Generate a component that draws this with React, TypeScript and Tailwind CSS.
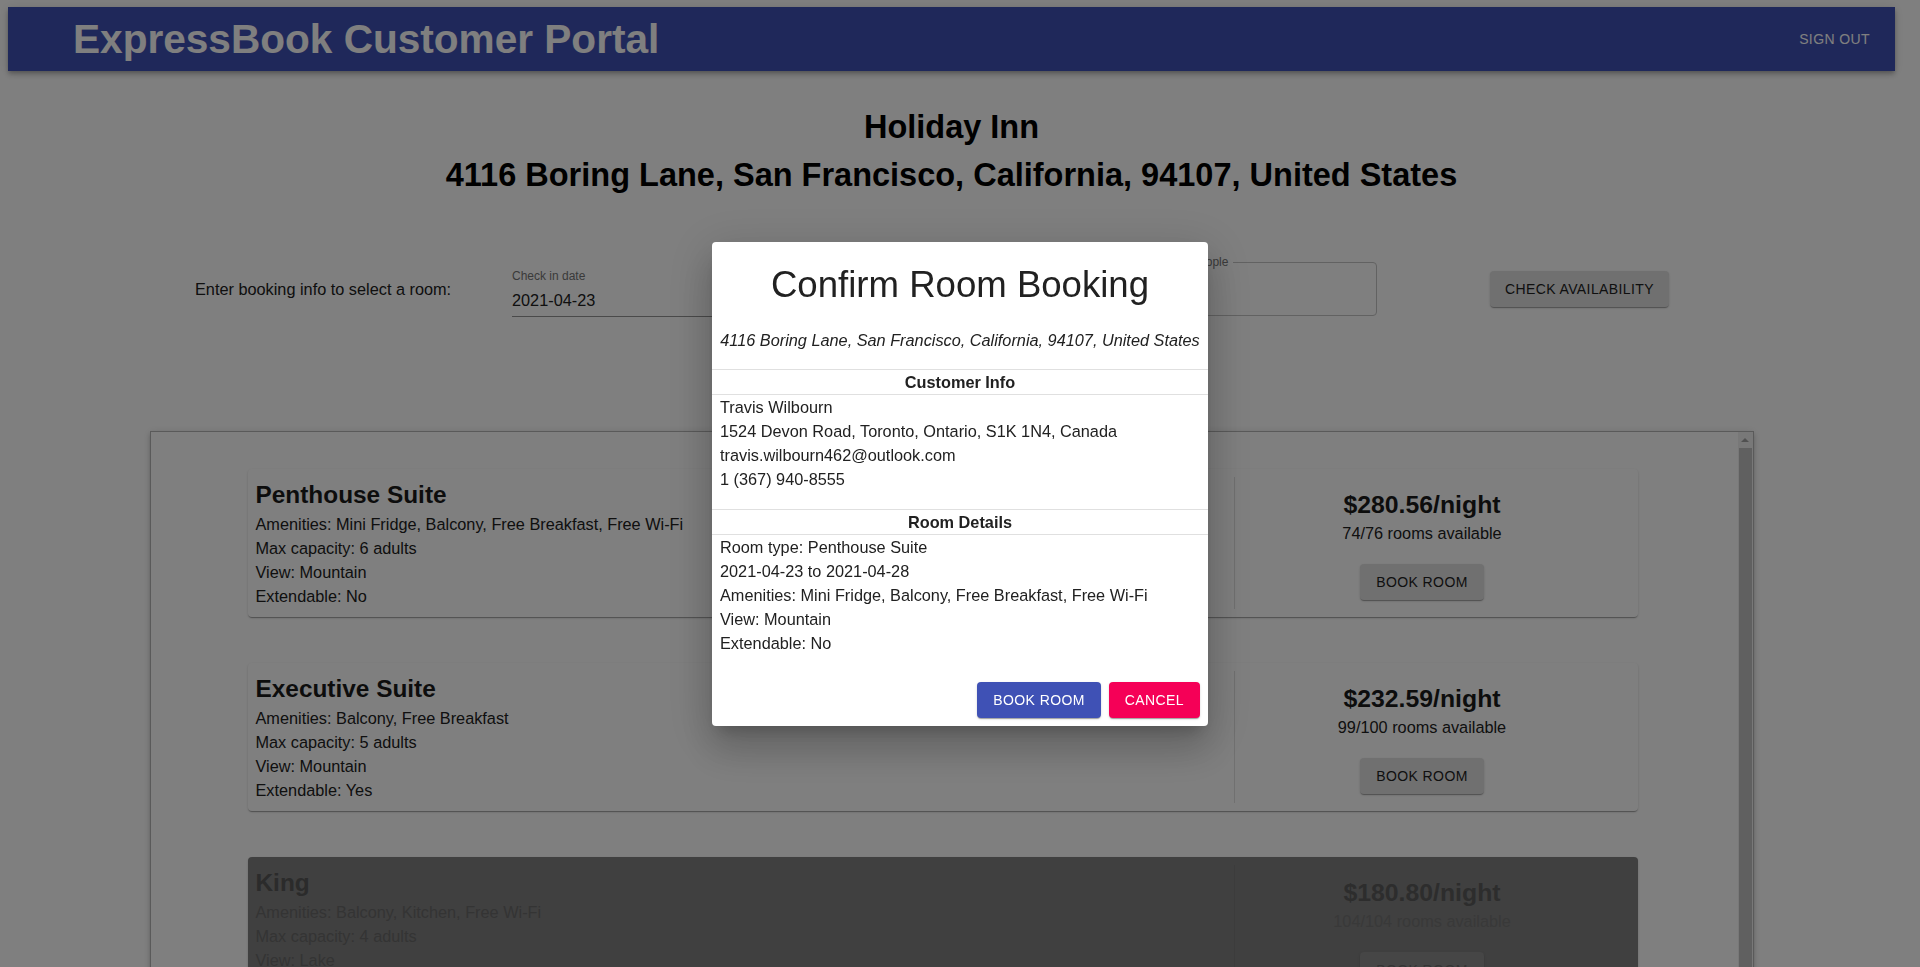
import React from "react";

type Room = {
  name: string;
  amenities: string;
  capacity: number;
  view: string;
  extendable: string;
  price: string;
  available: string;
  disabled?: boolean;
};

const rooms: Room[] = [
  {
    name: "Penthouse Suite",
    amenities: "Mini Fridge, Balcony, Free Breakfast, Free Wi-Fi",
    capacity: 6,
    view: "Mountain",
    extendable: "No",
    price: "280.56",
    available: "74/76",
  },
  {
    name: "Executive Suite",
    amenities: "Balcony, Free Breakfast",
    capacity: 5,
    view: "Mountain",
    extendable: "Yes",
    price: "232.59",
    available: "99/100",
  },
  {
    name: "King",
    amenities: "Balcony, Kitchen, Free Wi-Fi",
    capacity: 4,
    view: "Lake",
    extendable: "No",
    price: "180.80",
    available: "104/104",
    disabled: true,
  },
];

const paperShadow =
  "shadow-[0_2px_1px_-1px_rgba(0,0,0,0.2),0_1px_1px_0_rgba(0,0,0,0.14),0_1px_3px_0_rgba(0,0,0,0.12)]";

function RoomCard({ room }: { room: Room }) {
  const dim = room.disabled;
  return (
    <div
      className={
        "ml-[97px] flex h-[148px] w-[1390px] shrink-0 rounded p-2 " +
        paperShadow +
        (dim ? " bg-[#808080]" : " bg-white")
      }
    >
      <div className={"flex-1 leading-6 " + (dim ? "text-[#686868]" : "text-[#212121]")}>
        <h3 className={"text-[24.4px] font-bold leading-[35px] " + (dim ? "text-[#565656]" : "text-[#1a1a1a]")}>
          {room.name}
        </h3>
        <p>Amenities: {room.amenities}</p>
        <p>Max capacity: {room.capacity} adults</p>
        <p>View: {room.view}</p>
        <p>Extendable: {room.extendable}</p>
      </div>
      <div className={"w-px " + (dim ? "bg-[#787878]" : "bg-[#e0e0e0]")} />
      <div className="mr-5 flex w-[375px] flex-col items-center pt-[11px]">
        <div className={"text-[24.8px] font-bold leading-[33px] " + (dim ? "text-[#5a5a5a]" : "text-[#1a1a1a]")}>
          ${room.price}/night
        </div>
        <div className={"leading-6 " + (dim ? "text-[#727272]" : "text-[#212121]")}>
          {room.available} rooms available
        </div>
        <button
          className={
            "mt-[19px] h-9 rounded px-4 text-sm uppercase tracking-[0.4px] " +
            paperShadow +
            (dim ? " bg-[#8c8c8c] text-[#6a6a6a]" : " bg-[#e0e0e0] text-[#212121]")
          }
        >
          Book Room
        </button>
      </div>
    </div>
  );
}

function Scrollbar() {
  return (
    <div className="flex w-[15px] flex-col bg-[#f1f1f1]">
      <div className="flex h-[16px] items-center justify-center">
        <div className="h-0 w-0 border-x-[4px] border-b-[4px] border-x-transparent border-b-[#a3a3a3]" />
      </div>
      <div className="mx-px flex-1 bg-[#c1c1c1]" />
    </div>
  );
}

function ConfirmDialog() {
  return (
    <div className="fixed inset-0 flex items-center justify-center bg-black/50">
      <div className="w-[496px] rounded bg-white text-[#212121] shadow-[0_11px_15px_-7px_rgba(0,0,0,0.2),0_24px_38px_3px_rgba(0,0,0,0.14),0_9px_46px_8px_rgba(0,0,0,0.12)]">
        <h2 className="pt-[21px] text-center text-[36.6px] leading-[44px]">Confirm Room Booking</h2>
        <p className="mt-[21px] whitespace-nowrap text-center italic leading-6">
          4116 Boring Lane, San Francisco, California, 94107, United States
        </p>

        <div className="mt-[17px] border-y border-[#e0e0e0] text-center font-bold leading-6">Customer Info</div>
        <div className="px-2 leading-6">
          <p>Travis Wilbourn</p>
          <p>1524 Devon Road, Toronto, Ontario, S1K 1N4, Canada</p>
          <p>travis.wilbourn462@outlook.com</p>
          <p>1 (367) 940-8555</p>
        </div>

        <div className="mt-[18px] border-y border-[#e0e0e0] text-center font-bold leading-6">Room Details</div>
        <div className="px-2 leading-6">
          <p>Room type: Penthouse Suite</p>
          <p>2021-04-23 to 2021-04-28</p>
          <p>Amenities: Mini Fridge, Balcony, Free Breakfast, Free Wi-Fi</p>
          <p>View: Mountain</p>
          <p>Extendable: No</p>
        </div>

        <div className="mt-[19px] flex justify-end gap-2 p-2">
          <button
            className={"h-9 rounded bg-[#3f51b5] px-4 text-sm uppercase tracking-[0.4px] text-white " + paperShadow}
          >
            Book Room
          </button>
          <button
            className={"h-9 rounded bg-[#f50057] px-4 text-sm uppercase tracking-[0.4px] text-white " + paperShadow}
          >
            Cancel
          </button>
        </div>
      </div>
    </div>
  );
}

export default function App() {
  return (
    <div className="relative h-screen overflow-hidden bg-white pl-2 pr-[25px] pt-[7px] font-['Liberation_Sans',Arial,Helvetica,sans-serif] text-[16.3px] text-[#212121]">
      {/* app bar */}
      <header className="flex h-16 items-center justify-between bg-[#3f51b5] pl-[65px] pr-[25px] text-white shadow-[0_2px_4px_-1px_rgba(0,0,0,0.2),0_4px_5px_0_rgba(0,0,0,0.14),0_1px_10px_0_rgba(0,0,0,0.12)]">
        <h1 className="text-[40.6px] font-bold leading-none">ExpressBook Customer Portal</h1>
        <button className="text-sm uppercase tracking-[0.4px]">Sign Out</button>
      </header>

      {/* hotel */}
      <h1 className="mt-[38px] text-center text-[32.5px] font-bold leading-[37px] text-black">Holiday Inn</h1>
      <h1 className="mt-[11px] text-center text-[32.5px] font-bold leading-[37px] text-black">
        4116 Boring Lane, San Francisco, California, 94107, United States
      </h1>

      {/* booking form */}
      <div className="mt-[67px] flex h-[56px] items-center">
        <div className="ml-[187px] w-[317px]">Enter booking info to select a room:</div>
        <div className="w-[240px] self-end">
          <div className="pt-px text-[12px] leading-[15px] text-[#757575]">Check in date</div>
          <div className="border-b border-[#949494] pb-[6px] pt-[7px] leading-[19px]">2021-04-23</div>
        </div>
        <div className="ml-[60px] w-[240px] self-end">
          <div className="pt-px text-[12px] leading-[15px] text-[#757575]">Check out date</div>
          <div className="border-b border-[#949494] pb-[6px] pt-[7px] leading-[19px]">2021-04-28</div>
        </div>
        <div className="relative ml-[66px] flex h-[54px] w-[259px] items-center rounded border border-[#c4c4c4] px-[14px]">
          <span className="absolute -top-[8px] left-[9px] bg-white px-[5px] text-[12px] leading-[15px] text-[#757575]">
            Number of people
          </span>
          <span>2</span>
        </div>
        <button
          className={"ml-[113px] h-9 w-[179px] rounded bg-[#e0e0e0] text-sm uppercase tracking-[0.4px] " + paperShadow}
        >
          Check Availability
        </button>
      </div>

      {/* room list */}
      <div className="mx-auto mt-[114px] flex h-[700px] w-[1604px] border border-[#b5b5b5] bg-white shadow-[0_3px_3px_-2px_rgba(0,0,0,0.2),0_3px_4px_0_rgba(0,0,0,0.14),0_1px_8px_0_rgba(0,0,0,0.12)]">
        <div className="flex flex-1 flex-col gap-[46px] overflow-hidden pt-[37px]">
          {rooms.map((r) => (
            <RoomCard key={r.name} room={r} />
          ))}
        </div>
        <Scrollbar />
      </div>

      <ConfirmDialog />
    </div>
  );
}
